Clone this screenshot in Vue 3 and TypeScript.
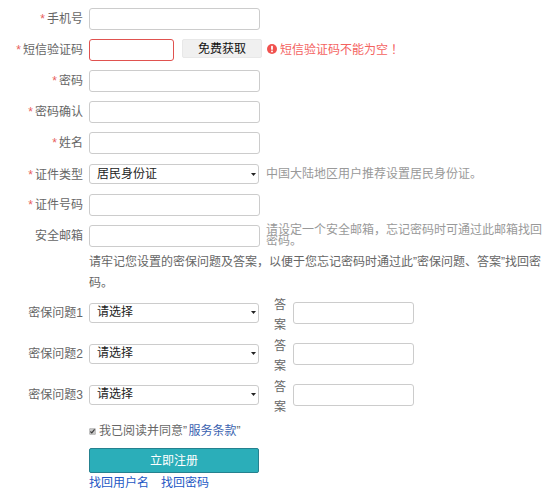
<script setup lang="ts">
interface Field { label: string; required: boolean; hint?: string }
const topFields: Field[] = [
  { label: '密码', required: true },
  { label: '密码确认', required: true },
  { label: '姓名', required: true },
]
const questions = ['密保问题1', '密保问题2', '密保问题3']
</script>

<template>
  <form class="form" @submit.prevent>
    <div class="row">
      <label class="label"><i>*</i>手机号</label>
      <input class="input" type="text" />
    </div>
    <div class="row">
      <label class="label"><i>*</i>短信验证码</label>
      <input class="input sms" type="text" />
      <button class="code" type="button">免费获取</button>
      <span class="error">
        <svg width="10" height="10" viewBox="0 0 10 10" aria-hidden="true">
          <circle cx="5" cy="5" r="5" fill="#f0524f" />
          <rect x="4.1" y="1.8" width="1.8" height="4" rx=".6" fill="#fff" />
          <rect x="4.1" y="6.6" width="1.8" height="1.7" rx=".6" fill="#fff" />
        </svg>
        <span>短信验证码不能为空<span class="bang">！</span></span>
      </span>
    </div>
    <div v-for="f in topFields" :key="f.label" class="row">
      <label class="label"><i v-if="f.required">*</i>{{ f.label }}</label>
      <input class="input" type="text" />
    </div>
    <div class="row type-row">
      <label class="label"><i>*</i>证件类型</label>
      <select class="select"><option>居民身份证</option></select>
      <span class="hint">中国大陆地区用户推荐设置居民身份证。</span>
    </div>
    <div class="row">
      <label class="label"><i>*</i>证件号码</label>
      <input class="input" type="text" />
    </div>
    <div class="row">
      <label class="label">安全邮箱</label>
      <input class="input" type="text" />
      <span class="hint email-hint">请设定一个安全邮箱，忘记密码时可通过此邮箱找回密码。</span>
    </div>
    <p class="notice">请牢记您设置的密保问题及答案，以便于您忘记密码时通过此”密保问题、答案”找回密码。</p>
    <div class="questions">
      <div v-for="q in questions" :key="q" class="row question">
        <label class="label">{{ q }}</label>
        <select class="select"><option>请选择</option></select>
        <span class="answer-label">答案</span>
        <input class="input answer" type="text" />
      </div>
    </div>
    <div class="actions">
      <label class="agree">
        <input class="check" type="checkbox" checked />
        <span>我已阅读并同意<span class="quote">”</span><a href="#" class="terms">服务条款</a><span class="quote">”</span></span>
      </label>
      <button class="submit" type="submit">立即注册</button>
      <div class="links">
        <a href="#">找回用户名</a>
        <a href="#">找回密码</a>
      </div>
    </div>
  </form>
</template>

<style>
html, body { margin: 0; background: #fff; }
</style>

<style scoped>
.form {
  width: 547px;
  height: 497px;
  box-sizing: border-box;
  padding-top: 8px;
  overflow: hidden;
  font: 12px/20px "Liberation Sans", "Noto Sans CJK SC", sans-serif;
  color: #666;
}
.row {
  display: flex;
  align-items: flex-start;
  height: 31px;
}
.label {
  flex: 0 0 83px;
  margin-right: 6px;
  text-align: right;
  line-height: 22px;
  white-space: nowrap;
}
.label i {
  margin-right: 2px;
  font-style: normal;
  color: #e8605c;
}
.input {
  flex: none;
  box-sizing: border-box;
  width: 171px;
  height: 22px;
  margin: 0;
  padding: 0 4px;
  border: 1px solid #ccc;
  border-radius: 3px;
  background: #fff;
  outline: none;
}
.sms {
  width: 85px;
  border-color: #e0524f;
}
.code {
  width: 80px;
  height: 19px;
  margin: 0 5px 0 8px;
  padding: 1px 0 0;
  border: 1px solid #e8e8e8;
  border-radius: 2px;
  background: #f0f0f0;
  font: inherit;
  line-height: 16px;
  color: #111;
}
.error {
  display: flex;
  align-items: center;
  gap: 3px;
  height: 20px;
  color: #f4635f;
}
.bang {
  font-family: "Noto Sans CJK TC", sans-serif;
}
.select {
  flex: none;
  box-sizing: border-box;
  width: 170px;
  height: 20px;
  margin: 0;
  padding: 0 0 1px 7px;
  border: 1px solid #ccc;
  border-radius: 3px;
  background: #fff url("data:image/svg+xml,%3Csvg xmlns='http://www.w3.org/2000/svg' width='5' height='3'%3E%3Cpath d='M0 0h5L2.5 3z' fill='%23222'/%3E%3C/svg%3E") no-repeat right 2px center;
  appearance: none;
  font: inherit;
  line-height: 16px;
  color: #222;
}
.type-row { padding-top: 1px; height: 30px; }
.hint {
  margin-left: 7px;
  color: #999;
  white-space: nowrap;
}
.email-hint {
  width: 277px;
  margin-left: 6px;
  line-height: 11px;
  white-space: normal;
}
.notice {
  width: 456px;
  height: 40px;
  margin: -4px 0 0 89px;
  line-height: 21px;
}
.question {
  align-items: center;
  height: 41px;
}
.answer-label {
  width: 12px;
  margin: 4px 7px 0 15px;
  line-height: 20px;
}
.answer {
  width: 121px;
  height: 22px;
}
.actions {
  display: flex;
  flex-direction: column;
  align-items: flex-start;
  margin: 6px 0 0 89px;
}
.agree {
  display: flex;
  align-items: center;
  gap: 3px;
  height: 20px;
}
.check {
  width: 7px;
  height: 7px;
  margin: 0;
  accent-color: #c4c4c4;
}
.quote {
  padding: 0 1.5px 0 0;
}
.terms {
  color: #3a62b0;
  text-decoration: none;
}
.submit {
  width: 170px;
  height: 25px;
  margin-top: 7px;
  padding: 0;
  border: 1px solid #25818f;
  border-radius: 2px;
  background: #2baeb9;
  font: inherit;
  color: #fff;
}
.links {
  display: flex;
  gap: 12px;
  margin-top: 0;
}
.links a {
  color: #2458c4;
  text-decoration: none;
}
</style>
